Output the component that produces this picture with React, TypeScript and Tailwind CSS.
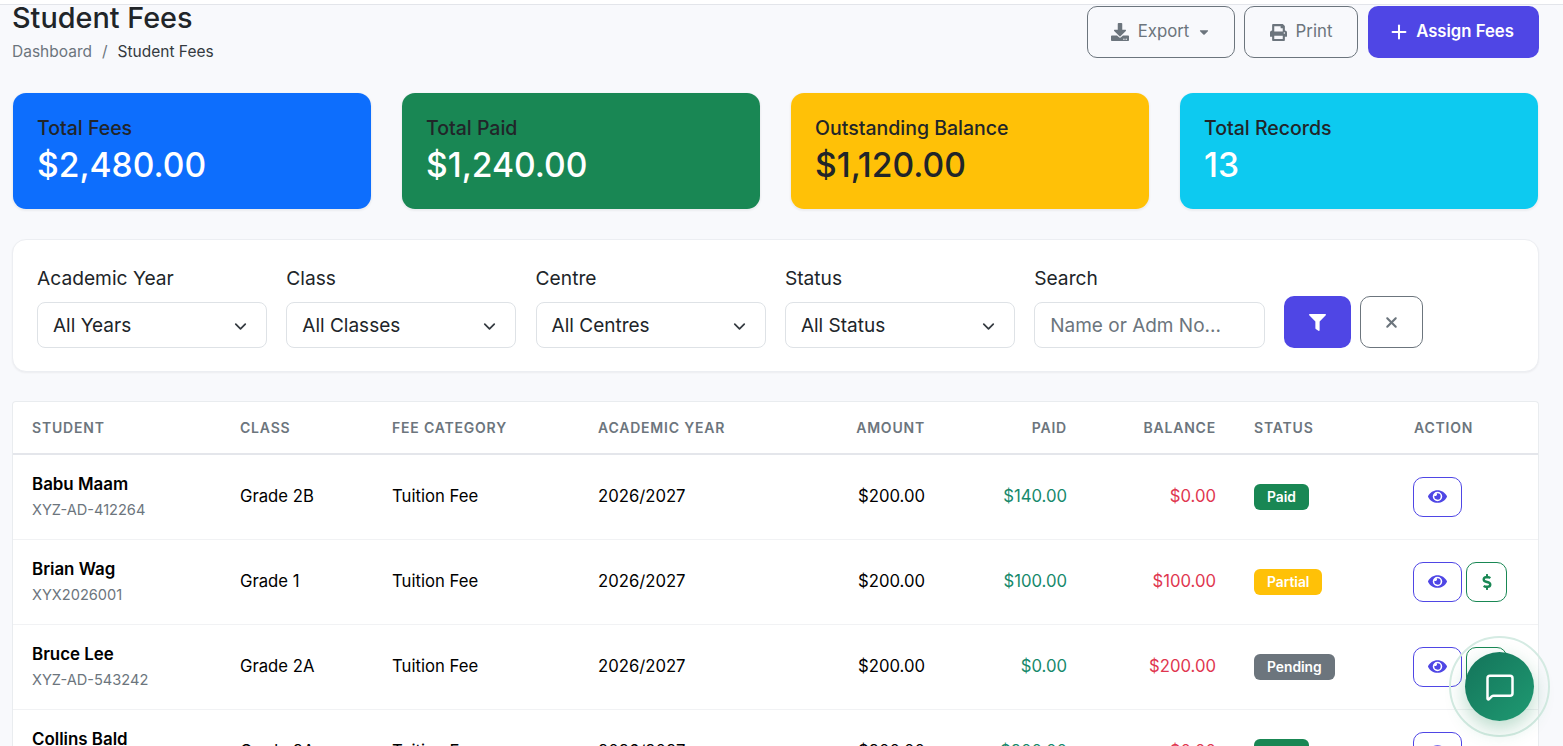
import { ChevronDown, MessageSquare, Plus } from 'lucide-react'
import { FaDownload, FaPrint, FaFilter, FaEye, FaDollarSign, FaCaretDown } from 'react-icons/fa'
import { FaXmark } from 'react-icons/fa6'

const stats = [
  { label: 'Total Fees', value: '$2,480.00', bg: 'bg-[#0d6efd]', text: 'text-white' },
  { label: 'Total Paid', value: '$1,240.00', bg: 'bg-[#198754]', text: 'text-white' },
  { label: 'Outstanding Balance', value: '$1,120.00', bg: 'bg-[#ffc107]', text: 'text-[#212529]' },
  { label: 'Total Records', value: '13', bg: 'bg-[#0dcaf0]', text: 'text-white' },
]

const filters = [
  { label: 'Academic Year', value: 'All Years' },
  { label: 'Class', value: 'All Classes' },
  { label: 'Centre', value: 'All Centres' },
  { label: 'Status', value: 'All Status' },
]

const rows = [
  { name: 'Babu Maam', adm: 'XYZ-AD-412264', cls: 'Grade 2B', paid: '$140.00', bal: '$0.00', status: 'Paid', pay: false },
  { name: 'Brian Wag', adm: 'XYX2026001', cls: 'Grade 1', paid: '$100.00', bal: '$100.00', status: 'Partial', pay: true },
  { name: 'Bruce Lee', adm: 'XYZ-AD-543242', cls: 'Grade 2A', paid: '$0.00', bal: '$200.00', status: 'Pending', pay: true },
  { name: 'Collins Bald', adm: 'XYZ-AD-100231', cls: 'Grade 2A', paid: '$200.00', bal: '$0.00', status: 'Paid', pay: false },
]

const badge: Record<string, string> = {
  Paid: 'bg-[#198754]',
  Partial: 'bg-[#ffc107]',
  Pending: 'bg-[#6c757d]',
}

const th = 'px-[19px] pb-[1px] text-[14px] font-semibold tracking-[0.8px] text-[#6c757d] uppercase'
const td = 'px-[19px]'

export default function App() {
  return (
    <div className="h-[746px] overflow-hidden bg-[#f8f9fc] font-['Inter',sans-serif] text-[#212529]">
      <div className="h-[5px] border-b border-[#e3e5ea] bg-white" />

      <div className="flex justify-between pr-6 pl-3">
        <div>
          <h1 className="text-[28.8px] leading-[26px] font-medium">Student Fees</h1>
          <div className="mt-[9px] flex text-[15.5px] leading-[24px] text-[#6c757d]">
            Dashboard<span className="px-[10px]">/</span><span className="text-[#343a40]">Student Fees</span>
          </div>
        </div>
        <div className="mt-px flex gap-[9px]">
          <button className="flex h-[52px] w-[148px] items-center justify-center gap-[9px] rounded-[10px] border border-[#6c757d] text-[16.8px] text-[#6c757d]">
            <FaDownload className="text-[18px]" /> Export <FaCaretDown className="-ml-px text-[14px]" />
          </button>
          <button className="flex h-[52px] w-[114px] items-center justify-center gap-[9px] rounded-[10px] border border-[#6c757d] text-[16.8px] text-[#6c757d]">
            <FaPrint className="text-[17px]" /> Print
          </button>
          <button className="ml-px flex h-[52px] w-[171px] items-center justify-center gap-[6px] rounded-[10px] bg-[#4f46e5] pr-[5px] text-[16.7px] font-semibold text-white">
            <Plus size={22} strokeWidth={2.2} /> Assign Fees
          </button>
        </div>
      </div>

      <div className="mt-[28px] grid grid-cols-4 gap-[29px] pr-6 pl-3">
        {stats.map((s) => (
          <div key={s.label} className={`h-[118px] rounded-[14px] border border-transparent bg-clip-padding px-6 pt-[22px] shadow-[0_1px_2px_rgba(0,0,0,0.05)] ${s.bg}`}>
            <div className="text-[19.5px] leading-[26px] font-medium text-[#212529]">{s.label}</div>
            <div className={`mt-[2px] text-[33.6px] leading-[44px] font-medium ${s.text}`}>{s.value}</div>
          </div>
        ))}
      </div>

      <div className="mt-[29px] mr-6 ml-3 flex h-[133px] items-end rounded-[14px] border border-[#eceef2] bg-white px-6 pb-[23px] shadow-[0_1px_2px_rgba(0,0,0,0.05)]">
        {filters.map((f) => (
          <div key={f.label} className="mr-[19.3px] w-[230px]">
            <div className="mb-[10px] text-[19.2px] leading-[27px]">{f.label}</div>
            <div className="flex h-[46px] items-center justify-between rounded-[8px] border border-[#dee2e6] bg-white pt-[2px] pr-[16px] pl-[15px] text-[19px]">
              {f.value}
              <ChevronDown size={19} strokeWidth={2.2} className="text-[#343a40]" />
            </div>
          </div>
        ))}
        <div className="w-[231px]">
          <div className="mb-[10px] text-[19.2px] leading-[27px]">Search</div>
          <div className="flex h-[46px] items-center rounded-[8px] border border-[#dee2e6] bg-white pt-[2px] pl-[15px] text-[19px] text-[#6c757d]">
            Name or Adm No...
          </div>
        </div>
        <button className="ml-[19px] flex h-[52px] w-[67px] items-center justify-center rounded-[10px] bg-[#4f46e5] text-white">
          <FaFilter className="text-[17px]" />
        </button>
        <button className="ml-[9px] flex h-[52px] w-[63px] items-center justify-center rounded-[10px] border border-[#6c757d] text-[#6c757d]">
          <FaXmark className="text-[17px]" />
        </button>
      </div>

      <div className="mt-[29px] mr-6 ml-3 rounded-t-[4px] border-x border-t border-[#e9ecef] bg-white">
        <table className="w-full table-fixed border-collapse">
          <colgroup>
            <col className="w-[208px]" />
            <col className="w-[152px]" />
            <col className="w-[206px]" />
            <col className="w-[210px]" />
            <col className="w-[155px]" />
            <col className="w-[142px]" />
            <col className="w-[149px]" />
            <col className="w-[160px]" />
            <col />
          </colgroup>
          <thead>
            <tr className="h-[52px] border-b-2 border-[#e4e6eb]">
              <th className={`${th} text-left`}>Student</th>
              <th className={`${th} text-left`}>Class</th>
              <th className={`${th} text-left`}>Fee Category</th>
              <th className={`${th} text-left`}>Academic Year</th>
              <th className={`${th} text-right`}>Amount</th>
              <th className={`${th} text-right`}>Paid</th>
              <th className={`${th} text-right`}>Balance</th>
              <th className={`${th} text-left`}>Status</th>
              <th className={`${th} text-left`}>Action</th>
            </tr>
          </thead>
          <tbody className="text-[16.7px] text-black">
            {rows.map((r) => (
              <tr key={r.name} className="h-[85px] border-b border-[#f1f2f4]">
                <td className={td}>
                  <div className="text-[16.9px] leading-[24px] font-semibold">{r.name}</div>
                  <div className="mt-[4px] text-[14.6px] leading-[21px] text-[#6c757d]">{r.adm}</div>
                </td>
                <td className={td}>{r.cls}</td>
                <td className={td}>Tuition Fee</td>
                <td className={td}>2026/2027</td>
                <td className={`${td} text-right`}>$200.00</td>
                <td className={`${td} text-right text-[#16896b]`}>{r.paid}</td>
                <td className={`${td} text-right text-[#e0364f]`}>{r.bal}</td>
                <td className={td}>
                  <span className={`inline-block rounded-[6px] px-[13px] align-middle text-[13.8px] leading-[26px] font-semibold text-white ${badge[r.status]}`}>{r.status}</span>
                </td>
                <td className={td}>
                  <div className="-ml-px flex gap-[4px]">
                    <button className="flex h-[40px] w-[49px] items-center justify-center rounded-[10px] border border-[#4f46e5] text-[#4f46e5]">
                      <FaEye className="text-[19px]" />
                    </button>
                    {r.pay && (
                      <button className="flex h-[40px] w-[41px] items-center justify-center rounded-[10px] border border-[#198754] text-[#198754]">
                        <FaDollarSign className="text-[16px]" />
                      </button>
                    )}
                  </div>
                </td>
              </tr>
            ))}
          </tbody>
        </table>
      </div>

      <div className="fixed top-[636px] left-[1449px] flex h-[101px] w-[101px] items-center justify-center rounded-full border-[2px] border-[#d5ebe3]">
        <button className="flex h-[69px] w-[69px] items-center justify-center rounded-full bg-gradient-to-br from-[#14745a] to-[#1f9a72] text-white shadow-[0_8px_20px_rgba(25,135,84,0.3)]">
          <MessageSquare size={30} strokeWidth={2} />
        </button>
      </div>
    </div>
  )
}
